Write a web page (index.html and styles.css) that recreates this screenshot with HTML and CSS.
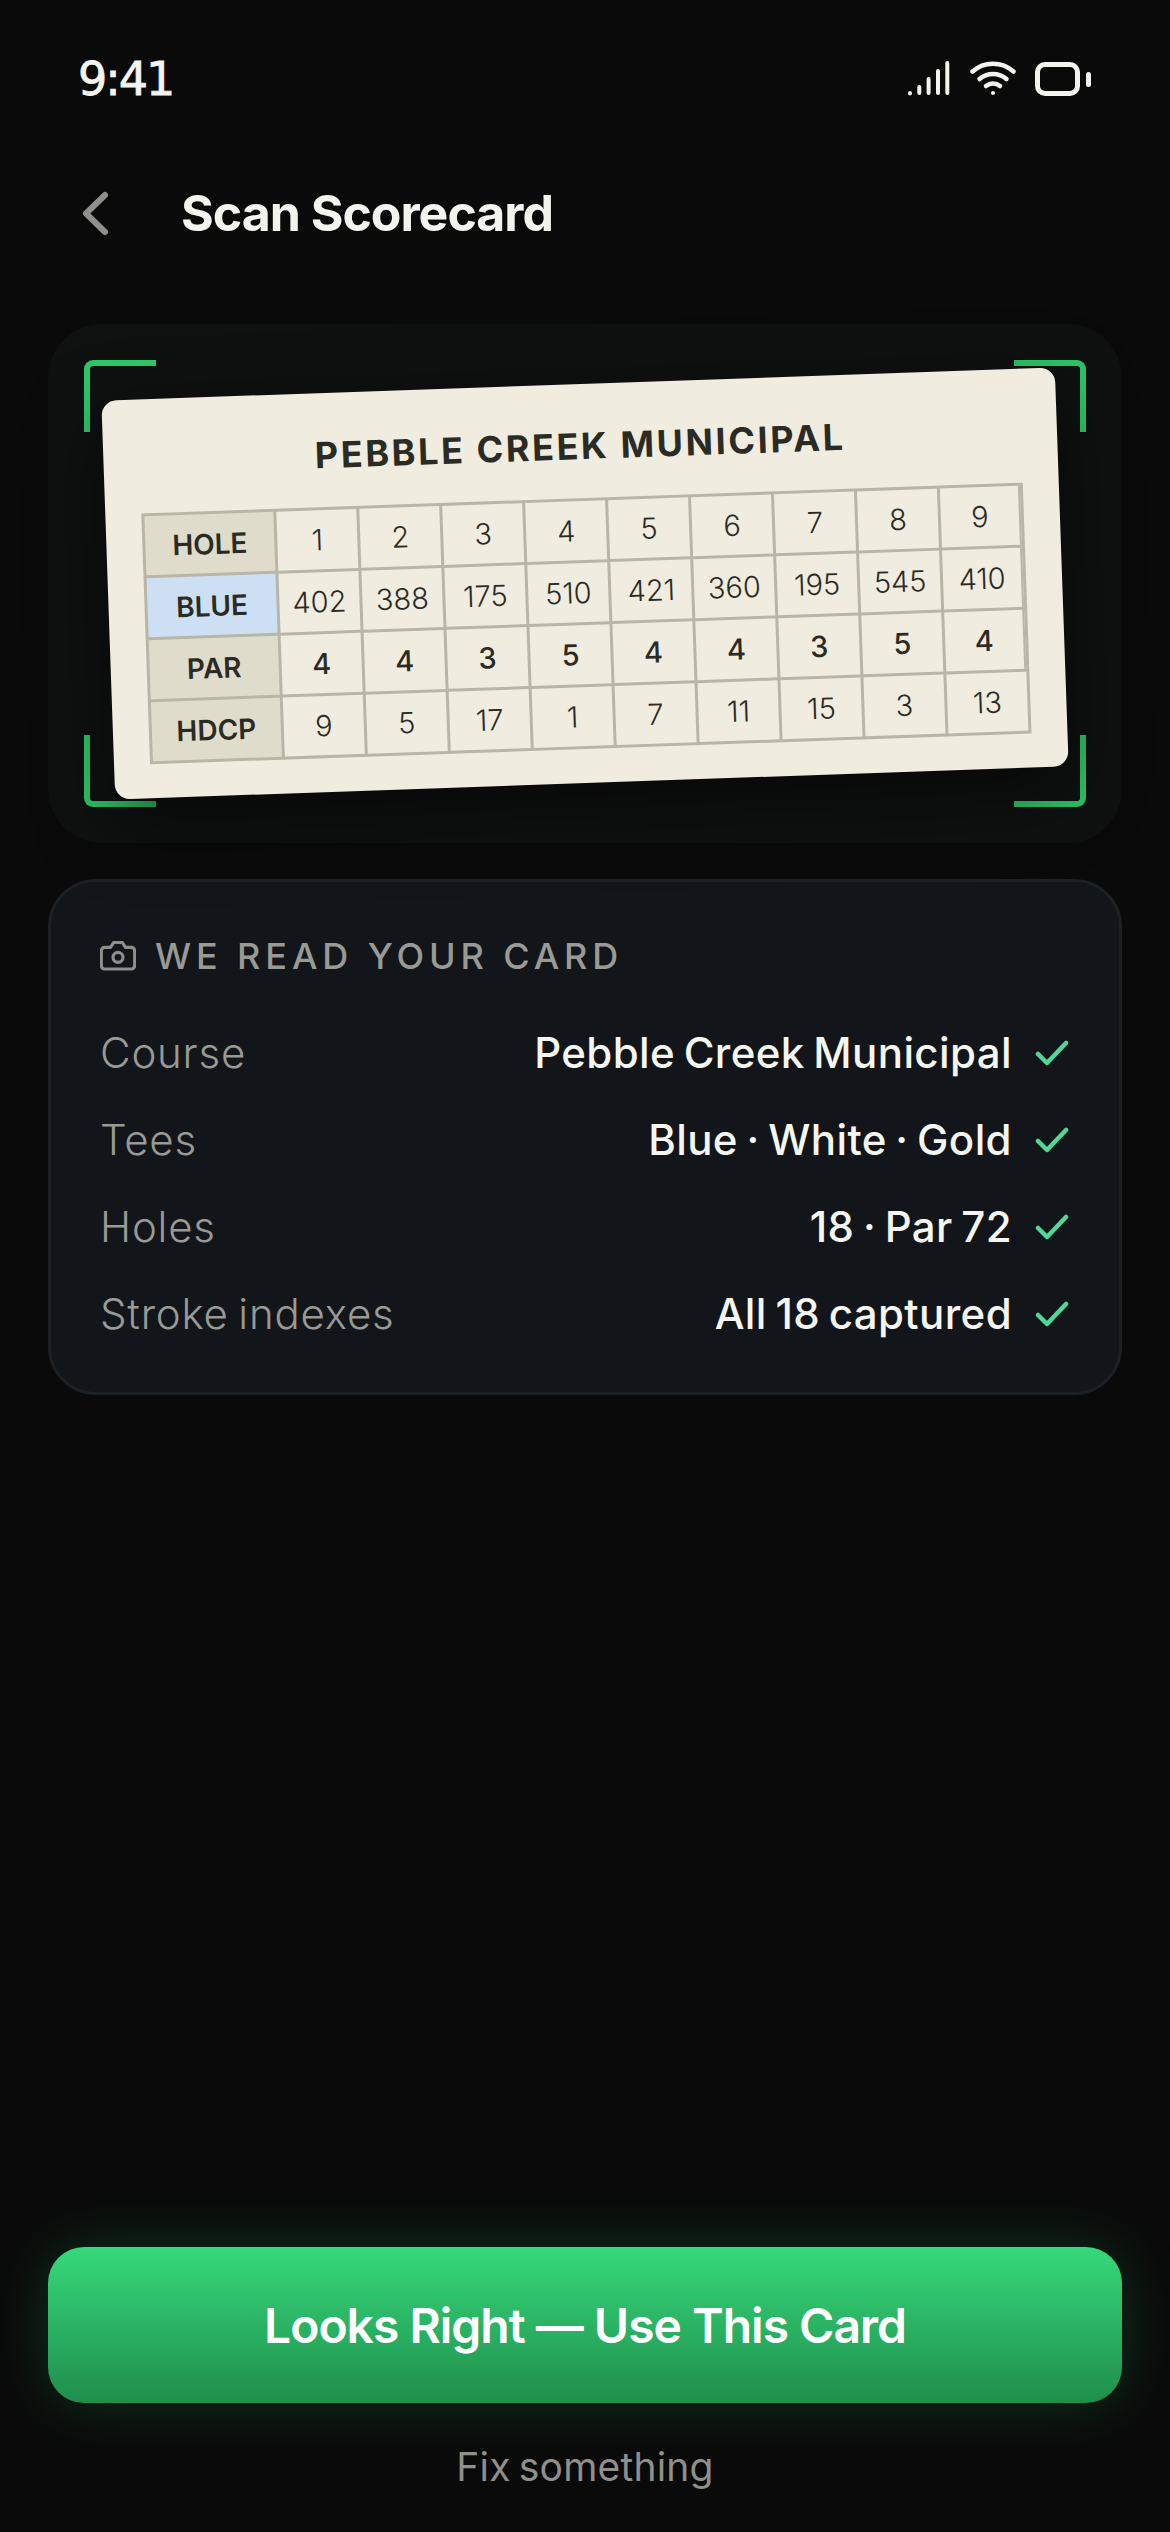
FILE: index.html
```html
<!DOCTYPE html>
<html lang="en">
<head>
  <meta charset="UTF-8" />
  <meta name="viewport" content="width=device-width, initial-scale=1.0"/>
  <title>Scan Scorecard</title>
  <link rel="stylesheet" href="styles.css">
</head>
<body>
  <div class="statusbar">
    <span class="time">9:41</span>
    <div class="status-icons">
      <svg class="ico-signal" width="44" height="36" viewBox="0 0 44 36" fill="none" stroke="#f4f4ef" stroke-width="4" stroke-linecap="round">
        <path d="M3 33v0.5M12.3 33v-6M21.6 33v-14M31 33v-22M40.3 33v-30"/>
      </svg>
      <svg class="ico-wifi" width="46" height="36" viewBox="0 0 46 36" fill="none" stroke="#f4f4ef" stroke-width="4.5" stroke-linecap="round">
        <path d="M2.5 11.5c11.500-10.500 29.500-10.500 41 0"/>
        <path d="M9.500 19c7.500-6.800 19.500-6.800 27 0"/>
        <path d="M16 26c4-3.400 10-3.400 14 0"/>
        <circle cx="23" cy="33" r="2" fill="#f4f4ef" stroke="none"/>
      </svg>
      <div class="battery"><span class="battery-body"></span><span class="battery-nub"></span></div>
    </div>
  </div>

  <header class="topbar">
    <svg class="back" width="30" height="48" viewBox="0 0 30 48" fill="none" stroke="#8f8f8b" stroke-width="6" stroke-linecap="round" stroke-linejoin="round">
      <path d="M24 6L5 24.500L24 43"/>
    </svg>
    <h1>Scan Scorecard</h1>
  </header>

  <section class="scanner">
    <i class="corner tl"></i><i class="corner tr"></i><i class="corner bl"></i><i class="corner br"></i>
    <div class="paper">
      <h2>PEBBLE CREEK MUNICIPAL</h2>
      <div class="grid">
        <div class="label">HOLE</div><div>1</div><div>2</div><div>3</div><div>4</div><div>5</div><div>6</div><div>7</div><div>8</div><div>9</div>
        <div class="label blue">BLUE</div><div>402</div><div>388</div><div>175</div><div>510</div><div>421</div><div>360</div><div>195</div><div>545</div><div>410</div>
        <div class="label">PAR</div><div class="par">4</div><div class="par">4</div><div class="par">3</div><div class="par">5</div><div class="par">4</div><div class="par">4</div><div class="par">3</div><div class="par">5</div><div class="par">4</div>
        <div class="label">HDCP</div><div>9</div><div>5</div><div>17</div><div>1</div><div>7</div><div>11</div><div>15</div><div>3</div><div>13</div>
      </div>
    </div>
  </section>

  <section class="info">
    <div class="info-head">
      <svg width="36" height="30" viewBox="1.200 3.200 21.600 18" fill="none" stroke="#8e8e8a" stroke-width="1.900" stroke-linejoin="round">
        <path d="M14.500 4h-5L7.500 7H4a2 2 0 0 0-2 2v9a2 2 0 0 0 2 2h16a2 2 0 0 0 2-2V9a2 2 0 0 0-2-2h-3.500z"/>
        <circle cx="12" cy="13" r="3"/>
      </svg>
      <span>WE READ YOUR CARD</span>
    </div>
    <div class="row">
      <span class="key">Course</span>
      <span class="val">Pebble Creek Municipal</span>
      <svg class="check" width="34" height="26" viewBox="0 0 34 26" fill="none" stroke="#4fd897" stroke-width="4.500" stroke-linecap="round" stroke-linejoin="round"><path d="M3 14l9 9L31 3"/></svg>
    </div>
    <div class="row">
      <span class="key">Tees</span>
      <span class="val">Blue · White · Gold</span>
      <svg class="check" width="34" height="26" viewBox="0 0 34 26" fill="none" stroke="#4fd897" stroke-width="4.500" stroke-linecap="round" stroke-linejoin="round"><path d="M3 14l9 9L31 3"/></svg>
    </div>
    <div class="row">
      <span class="key">Holes</span>
      <span class="val">18 · Par 72</span>
      <svg class="check" width="34" height="26" viewBox="0 0 34 26" fill="none" stroke="#4fd897" stroke-width="4.500" stroke-linecap="round" stroke-linejoin="round"><path d="M3 14l9 9L31 3"/></svg>
    </div>
    <div class="row">
      <span class="key">Stroke indexes</span>
      <span class="val">All 18 captured</span>
      <svg class="check" width="34" height="26" viewBox="0 0 34 26" fill="none" stroke="#4fd897" stroke-width="4.500" stroke-linecap="round" stroke-linejoin="round"><path d="M3 14l9 9L31 3"/></svg>
    </div>
  </section>

  <footer class="actions">
    <button class="primary">Looks Right — Use This Card</button>
    <a class="fix">Fix something</a>
  </footer>
</body>
</html>
```

FILE: styles.css
```css
* { box-sizing: border-box; }
html, body { margin: 0; height: 2532px; }
body {
  display: flex;
  flex-direction: column;
  width: 1170px;
  height: 2532px;
  overflow: hidden;
  background: #0a0a0a;
  color: #f4f4ef;
  font-family: Inter, "Noto Sans", sans-serif;
}

.statusbar {
  height: 110px;
  padding: 0 79px 0 78px;
  display: flex;
  justify-content: space-between;
  align-items: flex-end;
}
/* DejaVu has the footed 1 */
.time {
  font-family: "DejaVu Sans", sans-serif;
  font-size: 46px;
  line-height: 56px;
  margin-bottom: 3px;
  letter-spacing: -2px;
  -webkit-text-stroke: 0.8px #f4f4ef;
}
.status-icons {
  display: flex;
  align-items: flex-end;
  gap: 19px;
  margin-bottom: 14px;
}
.battery { display: flex; align-items: center; gap: 6px; }
.battery-body {
  width: 45px;
  height: 34px;
  border: 5px solid #f4f4ef;
  border-radius: 10px;
}
.battery-nub {
  width: 5px;
  height: 15px;
  border-radius: 3px;
  background: #f4f4ef;
}

.topbar {
  height: 214px;
  padding: 0 0 8px 81px;
  display: flex;
  align-items: center;
  gap: 70px;
}
.topbar h1 {
  margin: 0;
  font-size: 50px;
  font-weight: 700;
  letter-spacing: -1px;
  line-height: 60px;
}

.scanner {
  position: relative;
  height: 519px;
  margin: 0 48px;
  display: flex;
  align-items: center;
  justify-content: center;
  border-radius: 54px;
  background: #0f1110;
}
.corner {
  position: absolute;
  width: 72px;
  height: 72px;
  border: 0 solid #2ec76a;
}
.corner.tl { top: 36px; left: 36px; border-width: 6px 0 0 6px; border-top-left-radius: 9px; }
.corner.tr { top: 36px; right: 36px; border-width: 6px 6px 0 0; border-top-right-radius: 9px; }
.corner.bl { bottom: 36px; left: 36px; border-width: 0 0 6px 6px; border-bottom-left-radius: 9px; }
.corner.br { bottom: 36px; right: 36px; border-width: 0 6px 6px 0; border-bottom-right-radius: 9px; }

.paper {
  position: relative;
  width: 954px;
  height: 399px;
  padding: 0 36px;
  border-radius: 15px;
  background: #f0ecdf;
  color: #2b2b26;
  transform: rotate(-2deg);
  box-shadow: 0 24px 72px rgba(0,0,0,0.55);
}
.paper h2 {
  margin: 0;
  height: 114px;
  padding-top: 9px;
  display: flex;
  align-items: center;
  justify-content: center;
  font-size: 36px;
  font-weight: 700;
  letter-spacing: 2.600px;
}
.grid {
  display: grid;
  grid-template-columns: 129px repeat(9, 1fr);
  grid-auto-rows: 59px;
  gap: 3px;
  padding: 3px;
  background: #b9b6a7;
  font-size: 29px;
  font-weight: 300;
}
.grid div {
  display: flex;
  align-items: center;
  justify-content: center;
  background: #f0ecdf;
}
.grid .label { background: #e0dccb; font-size: 28px; font-weight: 600; }
.grid .blue { background: #cde0f3; }
.grid .par { font-weight: 550; }
.grid div:nth-child(10),
.grid div:nth-child(20),
.grid div:nth-child(30) { border-right: 2px solid #b9b6a7; }

.info {
  margin: 36px 48px 0;
  height: 516px;
  padding: 46px 50px 34px 49px;
  border: 3px solid #1c2126;
  border-radius: 48px;
  background: #12161b;
}
.info-head {
  height: 56px;
  margin-bottom: 25px;
  display: flex;
  align-items: center;
  gap: 19px;
  color: #9a9a94;
  font-size: 36px;
  font-weight: 500;
  letter-spacing: 4.900px;
}
.row {
  height: 87px;
  display: flex;
  align-items: center;
  font-size: 42px;
  letter-spacing: 0.400px;
  word-spacing: -3px;
}
.key { flex: 1; color: #9a9a94; font-weight: 300; letter-spacing: 0.800px; }
.val { color: #f6f6f1; font-weight: 500; }
.check { margin-left: 23px; flex: none; }

.actions {
  margin-top: auto;
  padding: 0 48px;
  display: flex;
  flex-direction: column;
  align-items: center;
}
.primary {
  width: 100%;
  height: 156px;
  border: 0;
  border-radius: 36px;
  background: linear-gradient(#36d97b, #1f8e4c);
  box-shadow: 0 0 60px rgba(46,194,105,0.22);
  color: #fff;
  font-family: inherit;
  font-size: 48px;
  font-weight: 600;
  letter-spacing: -1px;
}
.fix {
  height: 129px;
  padding-top: 40px;
  color: #8f8f8b;
  font-size: 39px;
  line-height: 48px;
  letter-spacing: 0.200px;
  word-spacing: -3px;
}
```
